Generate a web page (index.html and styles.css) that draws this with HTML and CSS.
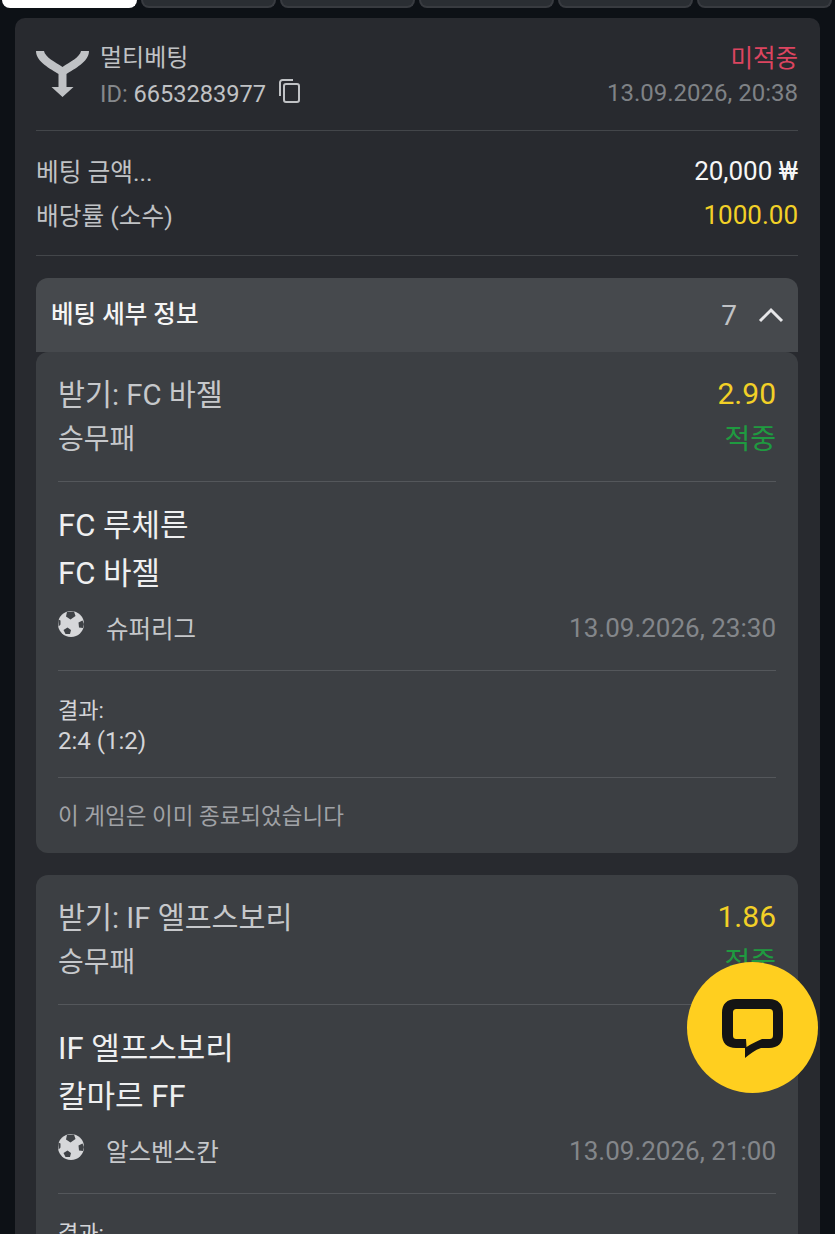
FILE: index.html
```html
<!DOCTYPE html>
<html lang="ko">
<head>
<meta charset="utf-8">
<title>멀티베팅</title>
<link rel="stylesheet" href="styles.css">
</head>
<body>
<nav class="tabs">
  <div class="tab tab-active"></div><div class="tab"></div><div class="tab"></div><div class="tab"></div><div class="tab"></div><div class="tab"></div>
</nav>
<main class="card">
  <header class="head">
    <svg class="multi-icon" viewBox="0 0 53 47"><path d="M0 1H8C9 7 19 12 26.5 17C34 12 44 7 45 1H53C53 12 38 19 30.5 24V37H37.5L26.5 47L15.5 37H22.5V24C15 19 0 12 0 1Z"/></svg>
    <div class="head-main">
      <div class="head-title">멀티베팅</div>
      <div class="head-id"><span><span class="dim">ID:</span> 6653283977</span><svg class="copy-icon" viewBox="0 0 22 24"><path d="M2 17V3.500A2.500 2.500 0 0 1 4.500 1H15"/><rect x="6" y="5" width="15" height="18" rx="2"/></svg></div>
    </div>
    <div class="head-side">
      <div class="lost">미적중</div>
      <div class="date">13.09.2026, 20:38</div>
    </div>
  </header>
  <section class="summary">
    <div class="row"><span class="row-label">베팅 금액...</span><span class="white">20,000 ₩</span></div>
    <div class="row"><span class="row-label">배당률 (소수)</span><span class="yellow">1000.00</span></div>
  </section>
  <div class="details-head">
    <span class="details-title">베팅 세부 정보</span>
    <span class="details-count">7</span>
    <svg class="chevron" viewBox="0 0 26 16"><path d="M2 14L13 3L24 14"/></svg>
  </div>

  <article class="bet">
    <div class="pick">
      <div class="line"><span class="pick-name">받기: FC 바젤</span><span class="odds">2.90</span></div>
      <div class="line"><span class="pick-type">승무패</span><span class="won">적중</span></div>
    </div>
    <div class="teams"><div>FC 루체른</div><div>FC 바젤</div></div>
    <div class="league">
      <svg class="ball" viewBox="0 0 26 26"><circle cx="13" cy="13" r="13" fill="#d6d7d9"/><path fill="#3f4246" d="M9 .8L16 .6L17.500 5L12.500 8.500L8 5.500ZM20.500 11.500L24.500 9.500L26 13L25 17L21 16.500ZM.2 8.500L2.500 9.500L2.500 13.500L.6 15.500ZM5.500 19L9.500 16.500L13 19L12 23L7.500 23Z"/></svg>
      <span class="league-name">슈퍼리그</span>
      <span class="league-date">13.09.2026, 23:30</span>
    </div>
    <div class="result"><div class="result-label">결과:</div><div class="result-score">2:4 (1:2)</div></div>
    <div class="note">이 게임은 이미 종료되었습니다</div>
  </article>

  <article class="bet">
    <div class="pick">
      <div class="line"><span class="pick-name">받기: IF 엘프스보리</span><span class="odds">1.86</span></div>
      <div class="line"><span class="pick-type">승무패</span><span class="won">적중</span></div>
    </div>
    <div class="teams"><div>IF 엘프스보리</div><div>칼마르 FF</div></div>
    <div class="league">
      <svg class="ball" viewBox="0 0 26 26"><circle cx="13" cy="13" r="13" fill="#d6d7d9"/><path fill="#3f4246" d="M9 .8L16 .6L17.500 5L12.500 8.500L8 5.500ZM20.500 11.500L24.500 9.500L26 13L25 17L21 16.500ZM.2 8.500L2.500 9.500L2.500 13.500L.6 15.500ZM5.500 19L9.500 16.500L13 19L12 23L7.500 23Z"/></svg>
      <span class="league-name">알스벤스칸</span>
      <span class="league-date">13.09.2026, 21:00</span>
    </div>
    <div class="result"><div class="result-label">결과:</div></div>
  </article>
</main>
<button class="chat" aria-label="채팅">
  <svg class="chat-icon" viewBox="0 0 61 59"><path fill-rule="evenodd" d="M14 0H47C56 0 61 5 61 14V35C61 44 56 49 47 49H39C33 51 28 55 23 59V49H14C5 49 0 44 0 35V14C0 5 5 0 14 0ZM15 10C12 10 11 11 11 14V36C11 39 12 40 15 40H24L24.500 48C29 45 35 42 40 40H47C50 40 51 39 51 36V14C51 11 50 10 47 10Z"/></svg>
</button>
</body>
</html>
```

FILE: styles.css
```css
* { box-sizing: border-box; }
html, body { margin: 0; height: 1234px; overflow: hidden; }
body {
  background: #0d1116;
  font-family: Roboto, "Noto Sans CJK KR", sans-serif;
  font-size: 24px;
  color: #c0c2c5;
  position: relative;
}
.tabs { display: flex; gap: 4px; height: 8px; padding: 0 3px 0 2px; }
.tab {
  flex: 1;
  background: #2a2e33;
  border: 2px solid #383b40;
  border-top: 0;
  border-radius: 0 0 9px 9px;
}
.tab-active { background: #fff; border-color: #fff; }
.card {
  margin: 10px 15px 0;
  padding: 0 22px 0 21px;
  background: #282a2f;
  border-radius: 10px 10px 0 0;
}
.head {
  display: flex;
  align-items: flex-start;
  height: 113px;
  padding-top: 24px;
  border-bottom: 1px solid #43464a;
}
.multi-icon { width: 53px; height: 47px; margin: 8px 11px 0 0; fill: #c0c2c5; flex: none; }
.head-main { flex: 1; }
.head-title { line-height: 32px; }
.head-id { display: flex; align-items: center; font-size: 23.600px; line-height: 36px; margin-top: 2px; }
.dim { color: #85888c; }
.copy-icon { width: 22px; height: 24px; margin: -6px 0 0 12px; fill: none; stroke: #c0c2c5; stroke-width: 2; }
.head-side { text-align: right; }
.lost { color: #dc4560; line-height: 34px; font-size: 24.500px; }
.date { color: #7f8286; line-height: 34px; }
.summary { padding-top: 18px; height: 125px; border-bottom: 1px solid #43464a; }
.row { display: flex; justify-content: space-between; align-items: center; height: 44px; }
.row-label { font-size: 24.700px; padding-bottom: 2px; }
.white { color: #f6f6f6; font-size: 26px; }
.yellow { color: #f2d027; font-size: 26px; }
.details-head {
  display: flex;
  align-items: center;
  height: 74px;
  margin-top: 22px;
  padding: 0 14px 0 15px;
  background: #46494d;
  border-radius: 12px 12px 0 0;
}
.details-title { flex: 1; color: #f5f5f5; font-weight: 500; font-size: 24.500px; padding-bottom: 5px; }
.details-count { font-size: 28px; color: #c0c2c5; margin-right: 21px; }
.chevron { width: 26px; height: 16px; fill: none; stroke: #e6e6e8; stroke-width: 3; }
.bet {
  background: #3c3f43;
  border-radius: 12px;
  padding: 0 22px;
  margin-bottom: 22px;
  font-size: 26px;
}
.pick { padding-top: 17px; height: 130px; border-bottom: 1px solid #54575b; }
.line { display: flex; justify-content: space-between; align-items: center; height: 45px; }
.pick-name { color: #c6c8cb; font-size: 29.300px; }
.pick-type { color: #c6c8cb; font-size: 28px; }
.odds { color: #f2d027; font-size: 30px; padding-top: 3px; }
.won { color: #1f9a40; font-size: 28px; }
.teams { padding-top: 20px; color: #eeeff0; font-size: 31px; line-height: 48px; }
.league { display: flex; align-items: center; height: 73px; padding-bottom: 13px; border-bottom: 1px solid #54575b; }
.ball { width: 26px; height: 26px; margin: -7px 22px 0 0; flex: none; }
.league-name { flex: 1; font-size: 24.500px; color: #c6c8cb; }
.league-date { color: #83868a; }
.result { padding: 25px 0 21px; line-height: 30px; color: #d4d5d8; border-bottom: 1px solid #54575b; }
.result-label { font-size: 22px; }
.result-score { font-size: 24px; }
.note { font-size: 22.500px; padding-top: 1px; line-height: 74px; color: #a0a2a6; }
.chat {
  position: absolute;
  left: 687px;
  top: 962px;
  width: 131px;
  height: 131px;
  padding: 0;
  border: 0;
  border-radius: 50%;
  background: #ffcf1f;
  display: flex;
  align-items: center;
  justify-content: center;
}
.chat-icon { width: 61px; height: 59px; fill: #141414; margin-top: 2px; }
```
